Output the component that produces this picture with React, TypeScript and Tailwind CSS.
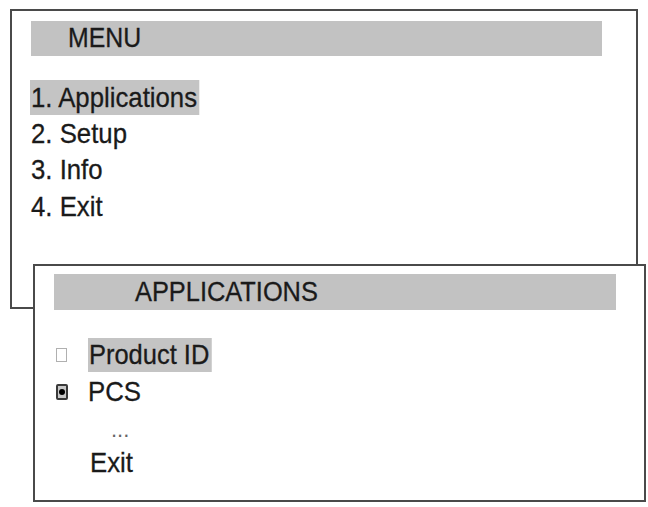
import React from "react";

const font = { fontFamily: '"Liberation Sans", Arial, sans-serif' };

export default function App() {
  return (
    <div className="relative w-[648px] h-[507px] bg-white overflow-hidden text-[#1a1a1a] [-webkit-text-stroke:0.3px_#1a1a1a]" style={font}>
      {/* MENU window */}
      <div className="absolute left-[10px] top-[9px] w-[628px] h-[300px] border-2 border-[#4a4a4a] bg-white pl-[19px] pt-[10px]">
        <div className="w-[571px] h-[35px] bg-[#c2c2c2] flex items-center pl-[37px] text-[27px] leading-none">
          <span className="inline-block origin-left scale-x-[0.92]">MENU</span>
        </div>
        <div className="mt-[24px] flex flex-col text-[28px] leading-none">
          <div className="h-[35px] flex items-center">
            <span className="bg-[#c4c4c4] h-[35px] flex items-center pr-[2px] -ml-[1px] pl-[1px] origin-left scale-x-[0.92]">1. Applications</span>
          </div>
          <div className="h-[37px] flex items-center"><span className="inline-block origin-left scale-x-[0.92]">2. Setup</span></div>
          <div className="h-[36px] flex items-center"><span className="inline-block origin-left scale-x-[0.92]">3. Info</span></div>
          <div className="h-[38px] flex items-center"><span className="inline-block origin-left scale-x-[0.92]">4. Exit</span></div>
        </div>
      </div>

      {/* APPLICATIONS window */}
      <div className="absolute left-[33px] top-[264px] w-[613px] h-[238px] border-2 border-[#4a4a4a] bg-white pl-[19px] pt-[8px]">
        <div className="w-[562px] h-[36px] bg-[#c2c2c2] flex items-center pl-[81px] text-[27px] leading-none">
          <span className="inline-block origin-left scale-x-[0.94]">APPLICATIONS</span>
        </div>
        <div className="mt-[28px] flex flex-col text-[28px] leading-none">
          <div className="h-[34px] flex items-center">
            <span className="w-[11px] h-[14px] border border-[#b0b0b0] bg-white ml-[2px]" />
            <span className="ml-[21px] bg-[#c4c4c4] h-[34px] flex items-center pl-[1px] pr-[3px] origin-left scale-x-[0.91]">Product ID</span>
          </div>
          <div className="h-[40px] flex items-center">
            <span className="w-[12px] h-[16px] border-2 border-[#3a3a3a] rounded-[2px] bg-[#c8c8c8] ml-[2px] flex items-center justify-center">
              <span className="w-[6px] h-[6px] rounded-full bg-black" />
            </span>
            <span className="ml-[20px] inline-block origin-left scale-x-[0.92]">PCS</span>
          </div>
          <div className="h-[36px] flex items-center pl-[57px] text-[22px] text-[#666] [-webkit-text-stroke:0]">...</div>
          <div className="h-[30px] flex items-center pl-[36px]"><span className="inline-block origin-left scale-x-[0.92]">Exit</span></div>
        </div>
      </div>
    </div>
  );
}
